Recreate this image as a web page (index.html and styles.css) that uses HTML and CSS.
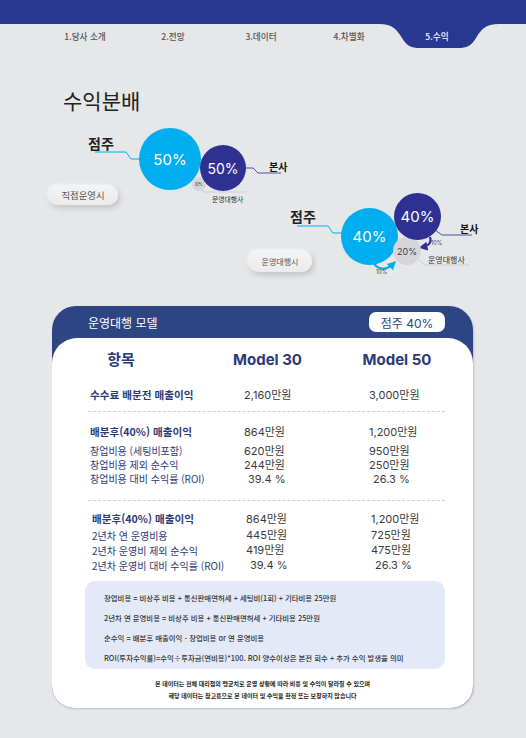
FILE: index.html
```html
<!DOCTYPE html>
<html lang="ko">
<head>
<meta charset="utf-8">
<title>수익분배</title>
<link rel="stylesheet" href="styles.css">
</head>
<body>
<header class="nav">
  <div class="topbar"></div>
  <nav class="tabs">
    <svg class="tab-shape" width="526" height="24" viewBox="0 0 526 24"><path d="M379 0 C393 0 397 6 402 14 C407 22 411 24 420 24 L458 24 C467 24 471 22 476 14 C481 6 485 0 499 0 Z" fill="#283891"/></svg>
    <span class="tab">1.당사 소개</span>
    <span class="tab">2.전망</span>
    <span class="tab">3.데이터</span>
    <span class="tab">4.차별화</span>
    <span class="tab active">5.수익</span>
  </nav>
</header>

<h1 class="title">수익분배</h1>

<section class="diagram">
  <svg class="links" width="526" height="192" viewBox="0 0 526 192">
    <defs>
      <marker id="ah-navy" markerWidth="4" markerHeight="4" refX="2" refY="2" orient="auto" markerUnits="strokeWidth"><path d="M0 0 L4 2 L0 4 Z" fill="#2e3192"/></marker>
      <marker id="ah-cyan" markerWidth="4" markerHeight="4" refX="2" refY="2" orient="auto" markerUnits="strokeWidth"><path d="M0 0 L4 2 L0 4 Z" fill="#00aeef"/></marker>
    </defs>
    <polyline points="95,38 126,38 131,45 140,45" fill="none" stroke="#00aeef" stroke-width="1"/>
    <polyline points="244,54 253,54 258,59 281,59" fill="none" stroke="#4e52a3" stroke-width="1"/>
    <polyline points="197,74 204,78 247,78" fill="none" stroke="#cfcfd2" stroke-width="1"/>
    <polyline points="297,112 328,112 333,119 342,119" fill="none" stroke="#00aeef" stroke-width="1"/>
    <polyline points="435,116 442,121 472,121" fill="none" stroke="#4e52a3" stroke-width="1"/>
    <polyline points="418,145 425,151 470,151" fill="none" stroke="#cfcfd2" stroke-width="1"/>
    <path d="M430 123 C432 129 428 132 423 133" fill="none" stroke="#2e3192" stroke-width="2.2" marker-end="url(#ah-navy)"/>
    <path d="M373 147 C376 156 386 157 393 150" fill="none" stroke="#00aeef" stroke-width="2.2" marker-end="url(#ah-cyan)"/>
  </svg>

  <div class="owner owner-1">점주</div>
  <div class="circle cyan c1">50%</div>
  <div class="circle gray g1">0%</div>
  <div class="circle navy n1">50%</div>
  <div class="hq hq-1">본사</div>
  <div class="agency agency-1">운영대행사</div>
  <div class="pill pill-1">직접운영시</div>

  <div class="owner owner-2">점주</div>
  <div class="circle cyan c2">40%</div>
  <div class="circle gray g2">20%</div>
  <div class="circle navy n2">40%</div>
  <div class="hq hq-2">본사</div>
  <div class="agency agency-2">운영대행사</div>
  <div class="small-pct pct-a">10%</div>
  <div class="small-pct pct-b">10%</div>
  <div class="pill pill-2">운영대행시</div>
</section>

<section class="card">
  <div class="card-head">
    <span class="card-title">운영대행 모델</span>
    <span class="chip">점주 40%</span>
  </div>
  <div class="card-body">
    <div class="thead">
      <span>항목</span>
      <span>Model 30</span>
      <span>Model 50</span>
    </div>

    <div class="row strong first">
      <span class="lbl">수수료 배분전 매출이익</span>
      <span class="val">2,160만원</span>
      <span class="val">3,000만원</span>
    </div>
    <div class="divider"></div>

    <div class="group">
      <div class="row strong">
        <span class="lbl">배분후(40%) 매출이익</span>
        <span class="val">864만원</span>
        <span class="val">1,200만원</span>
      </div>
      <div class="row sub">
        <span class="lbl">창업비용 (세팅비포함)</span>
        <span class="val">620만원</span>
        <span class="val">950만원</span>
      </div>
      <div class="row sub">
        <span class="lbl">창업비용 제외 순수익</span>
        <span class="val">244만원</span>
        <span class="val">250만원</span>
      </div>
      <div class="row sub">
        <span class="lbl">창업비용 대비 수익률 (ROI)</span>
        <span class="val pct">39.4 %</span>
        <span class="val pct">26.3 %</span>
      </div>
    </div>
    <div class="divider second"></div>

    <div class="group third">
      <div class="row strong">
        <span class="lbl">배분후(40%) 매출이익</span>
        <span class="val">864만원</span>
        <span class="val">1,200만원</span>
      </div>
      <div class="row sub wide">
        <span class="lbl">2년차 연 운영비용</span>
        <span class="val">445만원</span>
        <span class="val">725만원</span>
      </div>
      <div class="row sub wide">
        <span class="lbl">2년차 운영비 제외 순수익</span>
        <span class="val">419만원</span>
        <span class="val">475만원</span>
      </div>
      <div class="row sub wide">
        <span class="lbl">2년차 운영비 대비 수익률 (ROI)</span>
        <span class="val pct">39.4 %</span>
        <span class="val pct">26.3 %</span>
      </div>
    </div>

    <div class="notes">
      <p>창업비용 = 비상주 비용 + 통신판매면허세 + 세팅비(1회) + 기타비용 25만원</p>
      <p>2년차 연 운영비용 = 비상주 비용 + 통신판매면허세 + 기타비용 25만원</p>
      <p>순수익 = 배분후 매출이익 - 창업비용 or 연 운영비용</p>
      <p>ROI(투자수익률)=수익÷투자금(연비용)*100. ROI 양수이상은 본전 회수 + 추가 수익 발생을 의미</p>
    </div>

    <div class="disclaimer">
      <p>본 데이터는 전체 대리점의 평균치로 운영 상황에 따라 비용 및 수익이 달라질 수 있으며</p>
      <p>해당 데이터는 참고용으로 본 데이터 및 수익을 확정 또는 보장하지 않습니다</p>
    </div>
  </div>
</section>
</body>
</html>
```

FILE: styles.css
```css
* { box-sizing: border-box; }

html, body {
  margin: 0;
  padding: 0;
}

body {
  width: 526px;
  height: 738px;
  overflow: hidden;
  background: #e6e7e9;
  font-family: Inter, "Noto Sans CJK KR", sans-serif;
  color: #222;
}

/* ---------- nav ---------- */
.topbar {
  height: 24px;
  background: #283891;
}

.tabs {
  position: relative;
  height: 24px;
  display: flex;
  padding-left: 41px;
}

.tab-shape {
  position: absolute;
  left: 0;
  top: 0;
}

.tab {
  position: relative;
  width: 88px;
  text-align: center;
  line-height: 24px;
  font-size: 8.6px;
  font-weight: 500;
  color: #555;
  font-family: "Noto Sans CJK KR", sans-serif;
}

.tab.active { color: #fff; }

/* ---------- title ---------- */
.title {
  margin: 38px 0 0 63px;
  font-size: 21px;
  line-height: 28px;
  font-weight: 400;
  color: #222;
  font-family: "Noto Sans CJK KR", sans-serif;
}

/* ---------- diagram ---------- */
.diagram {
  position: relative;
  height: 192px;
}

.links {
  position: absolute;
  left: 0;
  top: 0;
}

.circle {
  position: absolute;
  border-radius: 50%;
  display: flex;
  align-items: center;
  justify-content: center;
  color: #fff;
  font-weight: 400;
}

.cyan { background: #00aeef; font-size: 15px; }
.navy { background: #2e3192; font-size: 14px; }
.gray { background: #d6d6d8; color: #444; }

.c1 { left: 139px; top: 14px; width: 62px; height: 62px; }
.n1 { left: 200px; top: 31px; width: 46px; height: 46px; }
.g1 { left: 192px; top: 63px; width: 14px; height: 14px; font-size: 4.5px; font-weight: 600; color: #555; }

.c2 { left: 341px; top: 94px; width: 57px; height: 57px; }
.n2 { left: 394px; top: 79px; width: 47px; height: 47px; font-size: 15px; }
.g2 { left: 393px; top: 123px; width: 28px; height: 28px; font-size: 9px; }

.owner {
  position: absolute;
  font-size: 14px;
  line-height: 16px;
  font-weight: 700;
  color: #222;
  font-family: "Noto Sans CJK KR", sans-serif;
}
.owner-1 { left: 88px; top: 21px; }
.owner-2 { left: 290px; top: 94px; }

.hq {
  position: absolute;
  font-size: 10px;
  line-height: 12px;
  font-weight: 700;
  color: #111;
  font-family: "Noto Sans CJK KR", sans-serif;
}
.hq-1 { left: 269px; top: 47px; }
.hq-2 { left: 460px; top: 109px; }

.agency {
  position: absolute;
  color: #333;
  font-family: "Noto Sans CJK KR", sans-serif;
}
.agency-1 { left: 212px; top: 80px; font-size: 6.8px; line-height: 10px; }
.agency-2 { left: 428px; top: 141px; font-size: 8px; line-height: 10px; }

.small-pct {
  position: absolute;
  font-size: 5.5px;
  line-height: 6px;
  color: #444;
}
.pct-a { left: 431px; top: 126px; }
.pct-b { left: 376px; top: 155px; }

.pill {
  position: absolute;
  display: flex;
  align-items: center;
  justify-content: center;
  border-radius: 11px;
  background: linear-gradient(180deg, #f4f4f5 0%, #ebebed 100%);
  box-shadow: 2px 3px 6px rgba(0, 0, 0, 0.16), -1px -1px 3px rgba(255, 255, 255, 0.8);
  color: #555;
  font-family: "Noto Sans CJK KR", sans-serif;
}
.pill-1 { left: 48px; top: 71px; width: 70px; height: 20px; font-size: 9.4px; }
.pill-2 { left: 248px; top: 136px; width: 64px; height: 22px; font-size: 8px; }

/* ---------- card ---------- */
.card {
  margin-left: 52px;
  width: 421px;
  background: #2d4582;
  border-radius: 24px 24px 22px 22px;
  box-shadow: 1px 1px 2px rgba(90, 90, 150, 0.3);
}

.card-head {
  height: 32px;
  display: flex;
  align-items: center;
  justify-content: space-between;
  padding: 0 28px 0 36px;
}

.card-title {
  color: #fff;
  font-size: 12px;
  font-family: "Noto Sans CJK KR", sans-serif;
}

.chip {
  width: 76px;
  height: 20px;
  border-radius: 7px;
  background: #fff;
  color: #2d4582;
  font-size: 12px;
  display: flex;
  align-items: center;
  justify-content: center;
}

.card-body {
  height: 370px;
  background: #fff;
  border-radius: 25px 25px 22px 22px;
  padding-top: 12px;
}

.thead {
  display: grid;
  grid-template-columns: 122px 171px 88px;
  padding-left: 8px;
  height: 20px;
  line-height: 20px;
  text-align: center;
  font-size: 15px;
  font-weight: 700;
  color: #2b3a78;
}

.row {
  display: grid;
  grid-template-columns: 154px 125px auto;
  padding-left: 38px;
  color: #2b3a78;
}

.row .lbl { font-family: "Noto Sans CJK KR", sans-serif; }

.row .val {
  color: #3b3b3b;
  font-size: 11px;
}

.row .val.pct { padding-left: 4px; }

.row.strong {
  height: 18px;
  line-height: 18px;
  font-size: 10.6px;
  font-weight: 700;
}

.row.strong .val { font-weight: 400; }

.row.first {
  margin-top: 15px;
  height: 20px;
  line-height: 20px;
}

.row.sub {
  height: 14px;
  line-height: 14px;
  font-size: 10px;
}

.group { margin-top: 11px; }
.group .row.sub:first-of-type { margin-top: 0; }
.group .row.strong + .row.sub { margin-top: 3px; }

.group.third { margin-top: 9px; }
.group.third .row { padding-left: 40px; }
.group.third .row.strong + .row.sub { margin-top: 0; }
.row.sub.wide { height: 15px; line-height: 15px; }

.divider {
  margin: 6px 28px 0 36px;
  border-top: 1px dashed #cfcfd4;
}
.divider.second { margin-top: 14px; }

.notes {
  margin: 8px 28px 0 33px;
  height: 88px;
  border-radius: 10px;
  background: #e3e9f6;
  padding: 7px 0 0 19px;
}

.notes p {
  margin: 0;
  line-height: 20px;
  font-size: 7.4px;
  font-weight: 500;
  color: #333;
  font-family: "Noto Sans CJK KR", sans-serif;
  white-space: nowrap;
}

.disclaimer {
  margin-top: 9px;
  text-align: center;
}

.disclaimer p {
  margin: 0;
  line-height: 11.5px;
  font-size: 6px;
  font-weight: 700;
  color: #222;
  font-family: "Noto Sans CJK KR", sans-serif;
  white-space: nowrap;
}
```
